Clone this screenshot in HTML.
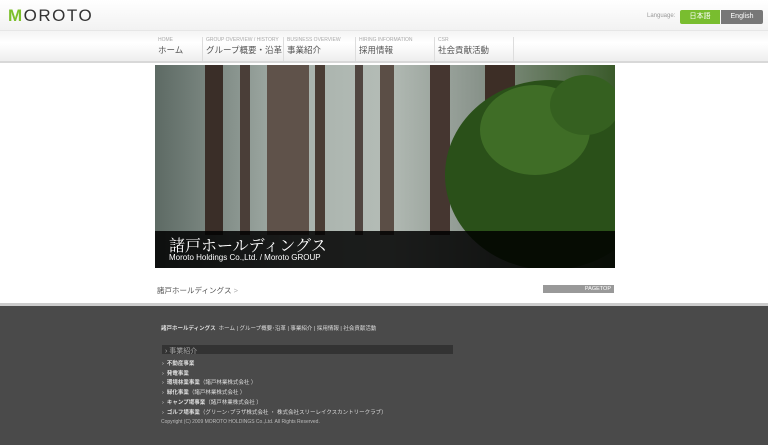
<!DOCTYPE html>
<html><head><meta charset="utf-8"><style>
*{margin:0;padding:0;box-sizing:border-box}
body{width:768px;height:445px;overflow:hidden;background:#fff;font-family:"Liberation Sans","Noto Sans CJK JP",sans-serif;position:relative}
.abs{position:absolute}
#top{left:0;top:0;width:768px;height:30px;background:linear-gradient(#fff,#f2f2f2)}
#nav{left:0;top:30px;width:768px;height:33px;background:linear-gradient(#f4f4f4,#fff 40%,#eee);border-top:1px solid #e6e6e6;border-bottom:2px solid #d8d8d8}
.ni{position:absolute;top:37px;height:24px;border-right:1px solid #ddd;padding-left:3px}
.ni small{display:block;font-size:5px;color:#aaa;line-height:7px}
.ni b{display:block;font-weight:normal;font-size:8.5px;color:#555;line-height:12px}
#hero{left:155px;top:65px;width:460px;height:203px;overflow:hidden;background:linear-gradient(90deg,#5d6a64,#a8b2ac 30%,#b4bcb6 50%,#8a948c 70%,#3a5a2a)}
#foot{left:0;top:303px;width:768px;height:142px;background:#4a4a4a;border-top:3px solid #ccc}
.f{position:absolute;color:#ddd;font-size:5.5px;white-space:nowrap}
</style></head><body>
<div id="top" class="abs"></div>
<div class="abs" style="left:8px;top:6px;font-size:17px;letter-spacing:1.5px;color:#333"><span style="color:#7cbf2b;font-weight:bold">M</span>OROTO</div>
<div class="abs" style="left:647px;top:13px;font-size:6px;color:#999">Language:</div>
<div class="abs" style="left:680px;top:10px;width:40px;height:14px;background:#79bd2f;color:#fff;font-size:7px;text-align:center;line-height:14px;border-radius:2px 0 0 2px">日本語</div>
<div class="abs" style="left:721px;top:10px;width:42px;height:14px;background:#777;color:#fff;font-size:7px;text-align:center;line-height:14px;border-radius:0 2px 2px 0">English</div>
<div id="nav" class="abs"></div>
<div class="ni" style="left:155px;width:48px"><small>HOME</small><b>ホーム</b></div>
<div class="ni" style="left:203px;width:81px"><small>GROUP OVERVIEW / HISTORY</small><b>グループ概要・沿革</b></div>
<div class="ni" style="left:284px;width:72px"><small>BUSINESS OVERVIEW</small><b>事業紹介</b></div>
<div class="ni" style="left:356px;width:79px"><small>HIRING INFORMATION</small><b>採用情報</b></div>
<div class="ni" style="left:435px;width:79px"><small>CSR</small><b>社会貢献活動</b></div>
<div id="hero" class="abs">
<svg width="460" height="203" style="position:absolute;left:0;top:0">
<rect x="50" y="0" width="18" height="170" fill="#3a2e28"/>
<rect x="85" y="0" width="10" height="170" fill="#4a3e38"/>
<rect x="112" y="0" width="42" height="170" fill="#5f524a"/>
<rect x="160" y="0" width="10" height="170" fill="#4a3d35"/>
<rect x="200" y="0" width="8" height="170" fill="#504540"/>
<rect x="225" y="0" width="14" height="170" fill="#5b4e46"/>
<rect x="275" y="0" width="20" height="170" fill="#453630"/>
<rect x="330" y="0" width="30" height="170" fill="#3d2e26"/>
<ellipse cx="395" cy="110" rx="105" ry="95" fill="#2a5019"/>
<ellipse cx="380" cy="65" rx="55" ry="45" fill="#3f6d26"/>
<ellipse cx="430" cy="40" rx="35" ry="30" fill="#356020"/>
</svg>
<div style="position:absolute;left:0;top:166px;width:460px;height:37px;background:rgba(0,0,0,.85)"></div>
<div style="position:absolute;left:14px;top:168px;color:#fff;font-family:'Noto Serif CJK SC',serif;font-size:16px">諸戸ホールディングス</div>
<div style="position:absolute;left:14px;top:188px;color:#fff;font-size:8px">Moroto Holdings Co.,Ltd. / Moroto GROUP</div>
</div>
<div class="abs" style="left:157px;top:285px;font-size:7.5px;color:#555">諸戸ホールディングス <span style="color:#aaa">&gt;</span></div>
<div class="abs" style="left:543px;top:285px;width:71px;height:8px;background:#999;color:#fff;font-size:5.5px;text-align:right;padding-right:3px;line-height:8px">PAGETOP</div>
<div id="foot" class="abs"></div>
<div class="f" style="left:161px;top:324px"><b>諸戸ホールディングス</b>&nbsp; ホーム | グループ概要･沿革 | 事業紹介 | 採用情報 | 社会貢献活動</div>
<div class="abs" style="left:162px;top:345px;width:291px;height:9px;background:#333"></div>
<div class="f" style="left:165px;top:346px;font-size:7px;color:#aaa">› 事業紹介</div>
<div class="f" style="left:162px;top:359px">›&nbsp; <b>不動産事業</b></div>
<div class="f" style="left:162px;top:369px">›&nbsp; <b>発電事業</b></div>
<div class="f" style="left:162px;top:378px">›&nbsp; <b>環境林業事業</b>（諸戸林業株式会社 ）</div>
<div class="f" style="left:162px;top:388px">›&nbsp; <b>緑化事業</b>（諸戸林業株式会社 ）</div>
<div class="f" style="left:162px;top:398px">›&nbsp; <b>キャンプ場事業</b>（諸戸林業株式会社 ）</div>
<div class="f" style="left:162px;top:408px">›&nbsp; <b>ゴルフ場事業</b>（グリーン･プラザ株式会社 ・ 株式会社スリーレイクスカントリークラブ）</div>
<div class="f" style="left:161px;top:419px;font-size:5px;color:#bbb">Copyright (C) 2009 MOROTO HOLDINGS Co.,Ltd. All Rights Reserved.</div>
</body></html>
